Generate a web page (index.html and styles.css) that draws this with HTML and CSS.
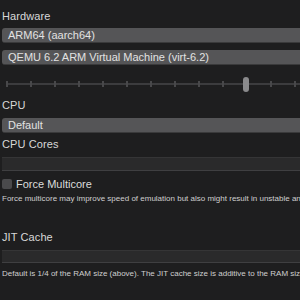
FILE: index.html
```html
<!DOCTYPE html>
<html lang="en">
<head>
  <meta charset="UTF-8">
  <title>VM Settings - System</title>
  <link rel="stylesheet" href="styles.css">
</head>
<body>
  <div class="settings">
    <div class="label first">Hardware</div>
    <div class="select">ARM64 (aarch64)</div>
    <div class="select second">QEMU 6.2 ARM Virtual Machine (virt-6.2)</div>

    <div class="slider">
      <div class="track"></div>
      <div class="ticks">
        <span></span><span></span><span></span><span></span><span></span>
        <span></span><span></span><span></span><span></span><span></span>
        <span></span><span></span><span></span>
      </div>
      <div class="thumb"></div>
    </div>

    <div class="label cpu">CPU</div>
    <div class="select">Default</div>

    <div class="label cores">CPU Cores</div>
    <div class="field"></div>

    <label class="check">
      <span class="box"></span>
      Force Multicore
    </label>
    <div class="hint">Force multicore may improve speed of emulation but also might result in unstable and incorrect emulation.</div>

    <div class="label jit">JIT Cache</div>
    <div class="field jit-field"></div>
    <div class="hint after-field">Default is 1/4 of the RAM size (above). The JIT cache size is additive to the RAM size in the total memory usage!</div>
  </div>
</body>
</html>
```

FILE: styles.css
```css
html, body {
  margin: 0;
  padding: 0;
  background: #1e1e1f;
  overflow: hidden;
}
body {
  font-family: "Liberation Sans", Arial, sans-serif;
  color: #dcdcdc;
}
.settings {
  width: 340px;
  padding-left: 2px;
  display: flex;
  flex-direction: column;
}
.label {
  font-size: 11px;
  line-height: 14px;
  color: #d8d8d8;
  letter-spacing: 0.1px;
}
.label.first {
  margin-top: 9px;
}
.label.cpu {
  margin-top: 6px;
}
.label.cores {
  margin-top: 4px;
}
.label.jit {
  margin-top: 25px;
}
.select {
  margin-top: 5px;
  height: 15px;
  line-height: 15px;
  padding-left: 6px;
  font-size: 11px;
  color: #e2e2e2;
  background: #555557;
  border-radius: 3px;
  border-bottom: 1px solid #3a3a3b;
  box-sizing: border-box;
}
.select.second {
  margin-top: 7px;
}
.label.cpu + .select {
  margin-top: 6px;
}
.slider {
  position: relative;
  margin-top: 11px;
  height: 16px;
  width: 300px;
}
.track {
  position: absolute;
  left: 5px;
  right: -2px;
  top: 7px;
  height: 2px;
  background: #3c3c3e;
}
.ticks {
  position: absolute;
  left: 4px;
  width: 290px;
  top: 5px;
  display: flex;
  justify-content: space-between;
}
.ticks span {
  width: 2px;
  height: 6px;
  background: #48484a;
}
.thumb {
  position: absolute;
  left: 241px;
  top: 1px;
  width: 6px;
  height: 15px;
  border-radius: 3px;
  background: #8a8a8c;
}
.field {
  margin-top: 6px;
  height: 14px;
  background: #2a2a2b;
  border-top: 1px solid #353536;
  border-bottom: 1px solid #3f3f41;
  box-sizing: border-box;
}
.jit-field {
  height: 13px;
}
.check {
  margin-top: 7px;
  display: flex;
  align-items: center;
  gap: 4px;
  font-size: 11px;
  line-height: 12px;
  color: #dcdcdc;
}
.box {
  width: 10px;
  height: 10px;
  border-radius: 2px;
  background: #4a4a4c;
}
.hint {
  margin-top: 3px;
  font-size: 8px;
  line-height: 12px;
  color: #cfcfcf;
  white-space: nowrap;
}
.hint.after-field {
  margin-top: 5px;
}
```
